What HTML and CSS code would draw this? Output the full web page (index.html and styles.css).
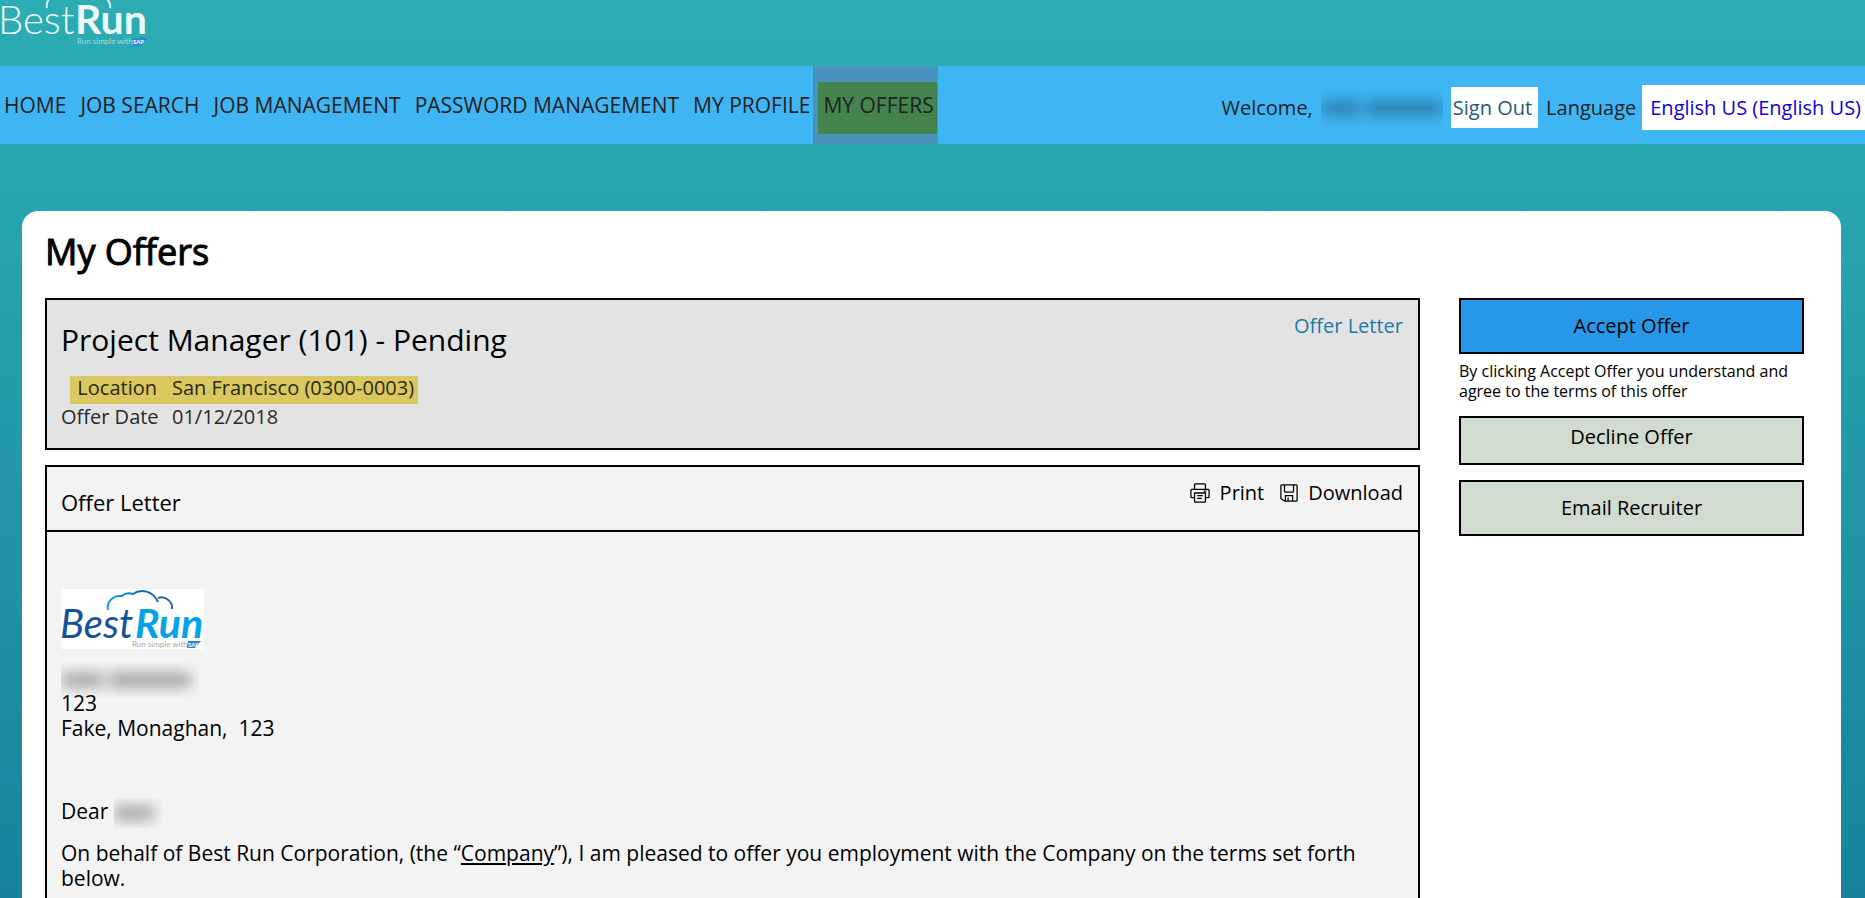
FILE: index.html
```html
<!DOCTYPE html>
<html lang="en">
<head>
<meta charset="utf-8">
<title>My Offers</title>
<link rel="stylesheet" href="styles.css">
</head>
<body>
<header class="brand">
  <svg class="brand-logo" width="152" height="50" viewBox="0 0 152 50" role="img" aria-label="BestRun">
    <path d="M47 8Q46 3 49 -1M110 8Q111 3 107 -1" fill="none" stroke="#d8f2f3" stroke-width="2"/>
    <text class="logo-thin" x="-2" y="34">Best</text>
    <text class="logo-thick" x="75" y="34">Run</text>
    <text class="logo-tag" x="77" y="44">Run simple with</text>
    <path d="M133 38H148L141 46H133Z" fill="#2f86d6"/>
    <text class="logo-sap" x="133" y="44">SAP</text>
  </svg>
</header>
<div class="bar">
  <nav class="menu">
    <a href="#">HOME</a>
    <a href="#">JOB SEARCH</a>
    <a href="#">JOB MANAGEMENT</a>
    <a href="#">PASSWORD MANAGEMENT</a>
    <a href="#">MY PROFILE</a>
    <a href="#" class="current" aria-current="page"><span>MY OFFERS</span></a>
  </nav>
  <div class="account">
    <span>Welcome,</span>
    <span class="redacted redacted-user"><i></i><i></i></span>
    <a href="#" class="sign-out">Sign Out</a>
    <span>Language</span>
    <a href="#" class="language">English US (English US)</a>
  </div>
</div>
<main class="panel">
  <h1>My Offers</h1>
  <div class="columns">
    <div class="offers">
      <section class="card summary">
        <div class="summary-main">
          <h2>Project Manager (101) - Pending</h2>
          <dl>
            <div class="fact marked"><dt>Location</dt><dd>San Francisco (0300-0003)</dd></div>
            <div class="fact"><dt>Offer Date</dt><dd>01/12/2018</dd></div>
          </dl>
        </div>
        <a href="#letter" class="letter-link">Offer Letter</a>
      </section>
      <section class="card letter" id="letter">
        <div class="letter-head">
          <h3>Offer Letter</h3>
          <div class="tools">
            <button type="button">
              <svg width="20" height="20" viewBox="0 0 22 22" fill="none" stroke="#000" stroke-width="1.4"><path d="M5 7V2Q5 1 6 1H16Q17 1 17 2V7M5 16H2Q1 16 1 15V8Q1 7 2 7H20Q21 7 21 8V15Q21 16 20 16H17M5 11H17V20Q17 21 16 21H6Q5 21 5 20ZM8 14H14M8 17H13M15 9H18"/></svg>
              Print
            </button>
            <button type="button">
              <svg width="18" height="18" viewBox="0 0 20 20" fill="none" stroke="#000" stroke-width="1.4"><path d="M2 1H18Q19 1 19 2V18Q19 19 18 19H5L1 16V2Q1 1 2 1ZM5 1V8Q5 9 6 9H14Q15 9 15 8V1M6 19V13H14V19M9 19V15"/></svg>
              Download
            </button>
          </div>
        </div>
        <div class="letter-body">
          <svg class="letter-logo" width="143" height="60" viewBox="0 0 143 60" role="img" aria-label="BestRun">
            <defs><linearGradient id="cloud"><stop offset="0" stop-color="#19a5e4"/><stop offset=".5" stop-color="#0f70b7"/><stop offset="1" stop-color="#3b5f9f"/></linearGradient></defs>
            <rect width="143" height="60" fill="#fff"/>
            <path d="M47 21C45 13 52 6 61 7Q65 3 72 5C80 -1 92 2 97 13M97 9C104 6 112 13 111 20" fill="none" stroke="url(#cloud)" stroke-width="2"/>
            <text class="logo-best" x="-1" y="49">Best</text>
            <text class="logo-run" x="74" y="49">Run</text>
            <text class="logo-tag dark" x="71" y="58">Run simple with</text>
            <path d="M127 52H140L134 59H126Z" fill="#2685cf"/>
            <text class="logo-sap" x="127" y="58">SAP</text>
          </svg>
          <span class="redacted redacted-name"><i></i><i></i></span>
          <p class="address">123<br>Fake, Monaghan,&nbsp; 123</p>
          <p class="greeting">Dear <span class="redacted redacted-first"><i></i></span></p>
          <p>On behalf of Best Run Corporation, (the “<u>Company</u>”), I am pleased to offer you employment with the Company on the terms set forth below.</p>
        </div>
      </section>
    </div>
    <aside class="actions">
      <button type="button" class="accept">Accept Offer</button>
      <p>By clicking Accept Offer you understand and agree to the terms of this offer</p>
      <button type="button" class="decline">Decline Offer</button>
      <button type="button" class="email">Email Recruiter</button>
    </aside>
  </div>
</main>
</body>
</html>
```
FILE: styles.css
```css
* { box-sizing: border-box; }
html {
  scrollbar-width: none;
  background: linear-gradient(#2dacb4, #28a4af 25%, #18839b) fixed;
}
body {
  margin: 0;
  font: 20px/25px "Open Sans", "Noto Sans", sans-serif;
  color: #000;
}
h1, h2, h3, p, dl, dd { margin: 0; font-weight: 400; }
a { text-decoration: none; color: inherit; }
button { font: inherit; color: inherit; cursor: pointer; }

.brand { height: 66px; }
.brand-logo { display: block; }
.logo-thin, .logo-thick { fill: #eefafa; font-family: Lato, sans-serif; font-size: 40px; }
.logo-thin { font-weight: 300; }
.logo-thick { font-weight: 700; font-size: 41px; }
.logo-tag { fill: #a5dde2; font: 8px Lato, sans-serif; }
.logo-tag.dark { fill: #a5a5a5; }
.logo-sap { fill: #fff; font: bold 6px Lato, sans-serif; }
.logo-best, .logo-run { font-family: Lato, sans-serif; font-size: 40px; font-style: italic; }
.logo-best { fill: #12539b; font-weight: 400; }
.logo-run { fill: #04a3e8; font-weight: 700; font-size: 41px; }

.bar {
  display: flex;
  justify-content: space-between;
  height: 78px;
  background: #40b5f3;
  color: #222;
}
.menu { display: flex; font-size: 21px; }
.menu a { display: flex; align-items: center; padding: 0 10px 0 4px; white-space: nowrap; }
.menu a:nth-child(5) { padding-right: 3px; }
.menu a.current { padding: 16px 1px 10px 5px; background: #4793bd; align-items: stretch; }
.current span { padding: 11px 3px 0 5px; background: #43844e; }
.account { display: flex; align-items: center; padding-top: 5px; white-space: nowrap; }
.sign-out { padding: 8px 6px 8px 2px; margin: 0 8px; background: #fff; color: #1d5b80; }
.language { padding: 10px 4px 10px 8px; margin-left: 6px; background: #fff; color: #1000dc; }

.redacted { display: inline-flex; align-items: center; gap: 4px; overflow: hidden; }
.redacted i { flex: 1; height: 14px; border-radius: 4px; background: #a2a2a2; filter: blur(7px); }
.redacted i + i { flex: 2; }
.redacted-user { width: 122px; height: 36px; margin-left: 8px; }
.redacted-user i { background: #2a7fae; }
.redacted-name { width: 138px; height: 36px; padding-right: 8px; }
.redacted-first { width: 48px; height: 30px; padding-right: 8px; vertical-align: middle; }

.panel {
  margin: 67px 24px 0 22px;
  padding: 22px 37px 24px 23px;
  border-radius: 16px 16px 0 0;
  background: #fff;
}
h1 { font-size: 36px; line-height: 38px; -webkit-text-stroke: 1px #000; }
.columns { display: grid; grid-template-columns: minmax(0, 1fr) 345px; gap: 39px; margin-top: 27px; }
.card { border: 2px solid #000; }
.summary { display: flex; justify-content: space-between; min-height: 152px; padding: 13px 15px 0 14px; background: #e3e3e3; }
h2 { margin-top: 7px; font-size: 30px; line-height: 40px; }
dl { margin-top: 16px; color: #2a2a2a; }
.fact { display: flex; gap: 15px; min-height: 30px; white-space: nowrap; }
.fact dt { width: 96px; text-align: right; }
.marked { width: max-content; min-height: 28px; margin-left: 9px; padding-right: 4px; background: #d9c75f; color: #2c2910; line-height: 23px; }
.marked dt { width: 87px; }
.letter-link { color: #1a7aa8; }

.letter { margin-top: 15px; background: #f3f3f3; }
.letter-head { display: flex; justify-content: space-between; min-height: 65px; padding: 13px 15px 0 14px; border-bottom: 2px solid #000; }
h3 { padding-top: 6px; font-size: 22px; line-height: 32px; }
.tools { display: flex; gap: 16px; align-items: flex-start; }
.tools button { display: flex; align-items: center; gap: 10px; padding: 0; border: 0; background: none; }
.letter-body { padding: 57px 15px 24px 14px; font-size: 21px; }
.letter-logo { display: block; margin-bottom: 13px; }
.redacted-name { display: flex; }
.address { margin-top: -7px; }
.greeting { margin: 57px 0 13px; }

.actions { display: flex; flex-direction: column; }
.actions button { border: 2px solid #000; background: #d2dbcf; text-align: center; }
.actions p { margin: 7px 0 15px; font-size: 16px; line-height: 20px; }
.actions .accept { height: 56px; padding: 0 0 2px; background: #2798e9; }
.actions .decline { height: 49px; padding: 0 0 8px; }
.actions .email { height: 56px; margin-top: 15px; padding: 0 0 2px; }
```
